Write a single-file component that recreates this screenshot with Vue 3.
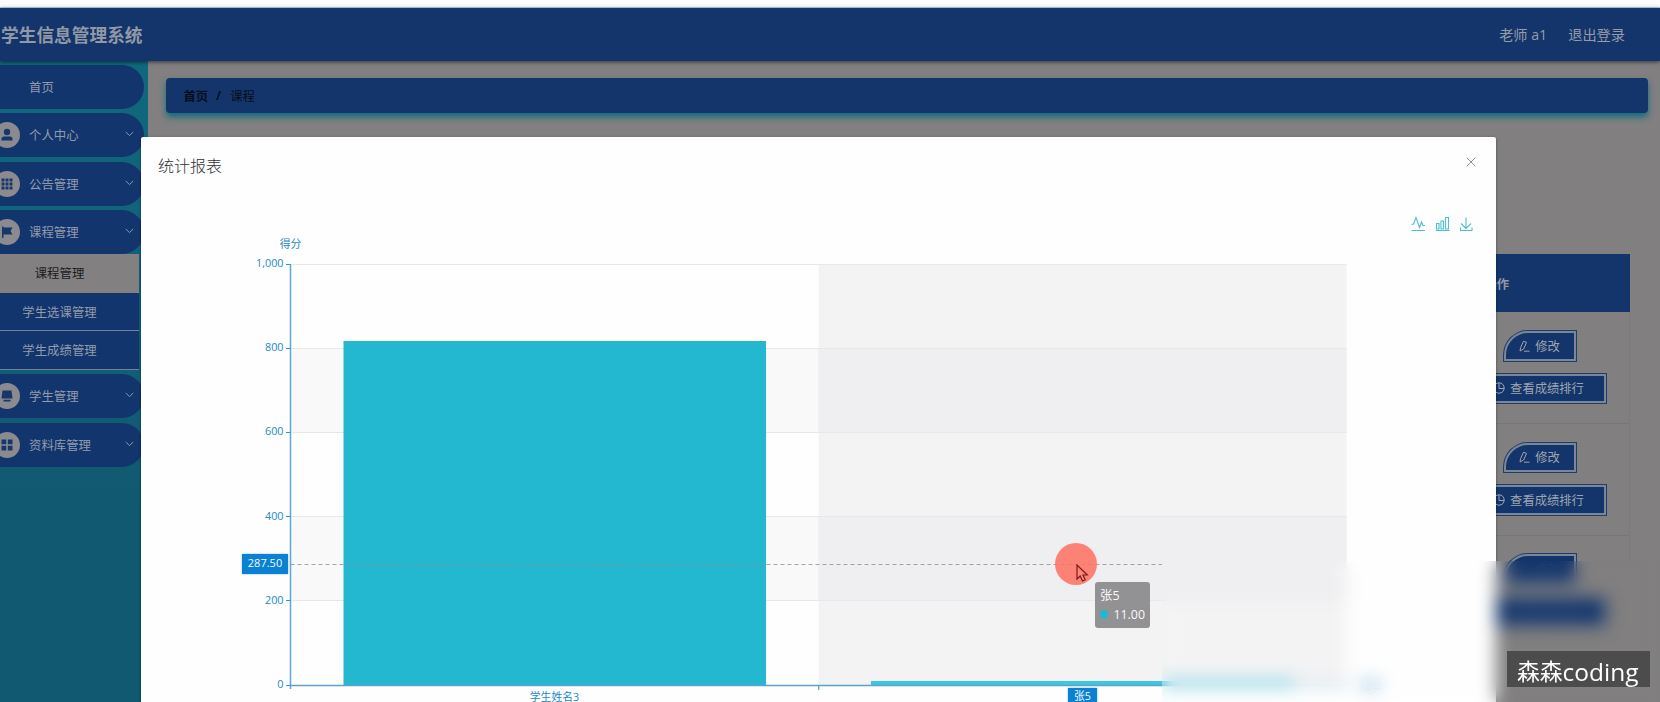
<script setup>
const menuTop = [
  { name: '首页', icon: '' },
  { name: '个人中心', icon: 'user' },
  { name: '公告管理', icon: 'grid' },
  { name: '课程管理', icon: 'flag' }
]
const subMenu = ['课程管理', '学生选课管理', '学生成绩管理']
const menuBottom = [
  { name: '学生管理', icon: 'screen' },
  { name: '资料库管理', icon: 'windows' }
]
const rows = [1, 2, 3]
const ticks = [1000, 800, 600, 400, 200, 0].map((v) => ({
  label: v.toLocaleString('en-US'),
  y: 127.5 + ((1000 - v) / 1000) * 421
}))
</script>

<template>
  <div class="page">
    <div class="strip"></div>
    <header class="header">
      <h1>学生信息管理系统</h1>
      <nav class="account"><span>老师 a1</span><span>退出登录</span></nav>
    </header>

    <div class="body">
      <aside class="sidebar">
        <template v-for="(group, g) in [menuTop, menuBottom]" :key="g">
          <div v-for="item in group" :key="item.name" class="item">
            <span class="badge" :class="{ hidden: !item.icon }">
              <svg width="14" height="14" viewBox="0 0 14 14" fill="#16376b">
                <template v-if="item.icon === 'user'">
                  <circle cx="7" cy="4" r="3.2" /><path d="M1.5 12.5V11Q1.5 8.5 4 8.5H10Q12.5 8.5 12.5 11V12.5Z" />
                </template>
                <template v-if="item.icon === 'grid'">
                  <path d="M1.5 1.5h3v3h-3zM5.5 1.5h3v3h-3zM9.5 1.5h3v3h-3zM1.5 5.5h3v3h-3zM5.5 5.5h3v3h-3zM9.5 5.5h3v3h-3zM1.5 9.5h3v3h-3zM5.5 9.5h3v3h-3zM9.5 9.5h3v3h-3z" />
                </template>
                <path v-if="item.icon === 'flag'" d="M2 1.5H3.5V2.5H12.5L10.5 6L12.5 9.5H3.5V13H2Z" />
                <template v-if="item.icon === 'screen'">
                  <path d="M2.5 1.5H11.5L12.5 9.5H1.5ZM3.5 10.7H10.5V12.5H3.5Z" />
                </template>
                <path v-if="item.icon === 'windows'" d="M1.5 1.5H6.2V6.2H1.5ZM7.8 1.5H12.5V6.2H7.8ZM1.5 7.8H6.2V12.5H1.5ZM7.8 7.8H12.5V12.5H7.8Z" />
              </svg>
            </span>
            <span class="label">{{ item.name }}</span>
            <svg v-if="item.icon" class="chev" width="9" height="6" viewBox="0 0 9 6">
              <path d="M0.8 1L4.5 4.6L8.2 1" fill="none" stroke="#8d97a9" stroke-width="1" />
            </svg>
          </div>
          <div v-if="g === 0" class="sub">
            <div v-for="(s, i) in subMenu" :key="s" class="subitem" :class="{ active: i === 0 }">{{ s }}</div>
          </div>
        </template>
      </aside>

      <main class="main">
        <div class="crumb"><b>首页</b><b class="slash">/</b><span>课程</span></div>
        <section class="table">
          <div class="thead">操作</div>
          <div v-for="r in rows" :key="r" class="row" :class="{ muted: r === 3 }">
            <button class="btn edit">
              <svg width="11" height="12" viewBox="0 0 11 12" fill="none" stroke="currentColor">
                <path d="M1.6 7.5L4.5 1.2L7.5 2.4L4.6 9L1 11ZM5 11.2H10.5" />
              </svg>
              修改
            </button>
            <button class="btn rank">
              <svg width="12" height="12" viewBox="0 0 12 12" fill="none" stroke="currentColor">
                <circle cx="6" cy="6" r="5.2" /><path d="M6 1V6.5H11" />
              </svg>
              查看成绩排行
            </button>
          </div>
        </section>
      </main>
    </div>

    <section class="dialog">
      <div class="dialog-head">
        <h2>统计报表</h2>
        <svg class="close" width="10" height="10" viewBox="0 0 10 10">
          <path d="M0.7 0.7L9.3 9.3M9.3 0.7L0.7 9.3" stroke="#909399" stroke-width="1" />
        </svg>
      </div>
      <svg class="chart" width="1355" height="565" viewBox="0 0 1355 565">
        <rect x="150" y="211.5" width="528" height="84" fill="#faf9fa" />
        <rect x="150" y="379.5" width="528" height="84.5" fill="#faf9fa" />
        <rect x="677.5" y="127" width="528" height="421.5" fill="#f3f3f4" />
        <rect x="677.5" y="211.5" width="528" height="84" fill="#efeef0" />
        <rect x="677.5" y="379.5" width="528" height="84.5" fill="#efeef0" />
        <path v-for="t in ticks" :key="t.label" :d="`M150 ${Math.round(t.y) - 0.5}H1205.5`" stroke="#e9e8e9" />
        <rect x="202.5" y="204" width="422.5" height="344.5" fill="#24b7d0" />
        <rect x="730" y="544" width="423" height="4.5" fill="#3ec8e0" />
        <path d="M149.5 127V552" stroke="#5ba9d8" stroke-width="1.5" />
        <path d="M149.5 548.5H1205.5" stroke="#5aa4c9" stroke-width="1.3" />
        <path d="M677.7 549V553" stroke="#5aa4c9" stroke-width="1.3" />
        <g class="axis">
          <path v-for="t in ticks" :key="t.label" :d="`M145 ${Math.round(t.y) - 0.5}H149.5`" stroke="#3494cc" />
          <text v-for="t in ticks" :key="'l' + t.label" x="142.5" :y="t.y + 2.5" text-anchor="end">{{ t.label }}</text>
          <text x="149.5" y="111" text-anchor="middle">得分</text>
          <text x="413.5" y="563.5" text-anchor="middle">学生姓名3</text>
          <text x="1219" y="552">姓名</text>
        </g>
        <path d="M149.5 427.5H1021" stroke="#8f8f96" stroke-opacity="0.8" stroke-dasharray="4 3" />
        <g fill="none" stroke="#4dc0cc" stroke-width="1.1">
          <path d="M1270.5 87.5L1272.5 87L1275 80.5L1278.5 90.5L1280.5 85L1282 88.5H1284M1270.5 93.5H1284" />
          <path d="M1295.5 86.5H1298V92H1295.5ZM1300 84H1302.5V92H1300ZM1304.5 80.5H1307.5V92H1304.5ZM1295 93.5H1308.5" />
          <path d="M1325 80.5V91M1320 86.5L1325 91.5L1330 86.5M1319.5 90.5V93.5H1331V90.5" />
        </g>
      </svg>
    </section>

    <div class="pointer y-pointer">287.50</div>
    <div class="pointer x-pointer">张5</div>
    <div class="halo"></div>
    <svg class="cursor" width="13" height="19" viewBox="0 0 13 19">
      <path d="M1 1V15L4.2 12L6.5 17L9.2 15.8L7 11H11.3Z" fill="#ff8478" stroke="#7c1a1a" stroke-width="1.2" />
    </svg>
    <div class="tooltip">
      <div>张5</div>
      <div class="value"><i></i>11.00</div>
    </div>
    <div class="frost"></div>
    <div class="sign">森森<span>coding</span></div>
  </div>
</template>

<style>
body { margin: 0; overflow: hidden; }
</style>

<style scoped>
* { box-sizing: border-box; }
.page {
  position: relative;
  width: 1660px;
  height: 702px;
  overflow: hidden;
  background: #817f7f;
  font-family: "Open Sans", "Noto Sans CJK SC", sans-serif;
  display: flex;
  flex-direction: column;
}
.strip { height: 8px; flex: none; background: #fcfcfe; border-bottom: 1px solid #c4d2ec; }
.header {
  height: 53px;
  flex: none;
  display: flex;
  align-items: center;
  justify-content: space-between;
  padding: 0 35px 1px 1px;
  background: #13356b;
  box-shadow: 0 1px 4px rgba(0, 0, 0, 0.6);
  color: #959ba8;
  z-index: 1;
}
h1 { margin: 0; font-size: 17.7px; font-weight: 700; color: #9299a6; }
.account { display: flex; gap: 21px; font-size: 14.2px; }
.body { flex: 1; display: flex; min-height: 0; }
.sidebar {
  width: 148px;
  flex: none;
  padding-top: 4px;
  background: linear-gradient(#10687d, #115f77 45%, #115970 70%);
}
.item {
  width: 144px;
  height: 43.8px;
  margin-bottom: 4.6px;
  display: flex;
  align-items: center;
  background: #13356d;
  border-radius: 0 22px 22px 0;
  color: #929bac;
  font-size: 12.4px;
}
.badge {
  width: 26px;
  height: 26px;
  margin-left: -6px;
  flex: none;
  display: flex;
  align-items: center;
  justify-content: center;
  border-radius: 50%;
  background: #8b8b8f;
}
.badge.hidden { visibility: hidden; }
.label { margin-left: 9px; flex: 1; }
.chev { margin-right: 10px; margin-top: -2px; }
.sub { width: 139px; margin: -4.6px 0 4.6px; }
.subitem {
  height: 38.6px;
  padding: 0.5px 20px 0 0;
  display: flex;
  align-items: center;
  justify-content: center;
  background: #13356d;
  border-bottom: 1px solid #72809b;
  color: #929bac;
  font-size: 12.4px;
}
.subitem.active { background: #838081; border-color: #838081; color: #1c1c1c; }
.main { flex: 1; padding: 17px 12px 0 18px; }
.crumb {
  height: 35px;
  padding: 0 17.5px;
  display: flex;
  align-items: center;
  background: #13356b;
  border-radius: 4px;
  box-shadow: 0 4px 6px #106b80;
  font-size: 12.3px;
  color: #070e1c;
}
.crumb .slash { margin: 0 9px 0 8px; }
.table { width: 1444px; margin-top: 141px; border-right: 1px solid #7b7a7c; margin-left: 19.5px; }
.thead {
  height: 58px;
  margin-right: -1px;
  padding: 1px 0 0 1299px;
  display: flex;
  align-items: center;
  background: #13356b;
  color: #9299a6;
  font-size: 12.3px;
  font-weight: 700;
}
.row {
  height: 112px;
  width: 266px;
  margin-left: auto;
  padding-top: 21px;
  display: flex;
  flex-direction: column;
  align-items: center;
  gap: 17px;
  border-bottom: 1px solid #787777;
}
.row + .row { height: 111.5px; padding-top: 20.5px; }
.btn {
  height: 25.5px;
  flex: none;
  display: flex;
  align-items: center;
  justify-content: center;
  gap: 5px;
  border: 0;
  padding: 0;
  background: #13356b;
  box-shadow: 0 0 0 2px #7f8693, 0 0 0 3px #1c3d70;
  color: #9ea4af;
  font-family: inherit;
  font-size: 12.3px;
}
.muted .btn { color: #29477a; }
.edit { width: 68px; margin-left: 88px; border-radius: 22px 0 0 0; }
.rank { width: 130px; margin-left: 86px; }
.dialog {
  position: absolute;
  left: 141px;
  top: 137px;
  width: 1355px;
  height: 580px;
  background: #fefefe;
  border-radius: 2px 2px 0 0;
  box-shadow: 0 1px 3px rgba(0, 0, 0, 0.45);
  z-index: 2;
}
.dialog-head {
  height: 56px;
  display: flex;
  align-items: center;
  justify-content: space-between;
  padding: 0 20px 0 17px;
}
h2 { margin: 0; font-size: 16px; font-weight: 300; color: #303133; }
.close { margin-top: -6px; }
.chart { display: block; margin-top: -71px; position: relative; top: 15px; overflow: visible; }
.axis text { font-size: 10.8px; fill: #2489c4; font-family: "Open Sans", "Noto Sans CJK SC", sans-serif; }
.pointer {
  position: absolute;
  z-index: 3;
  height: 20px;
  line-height: 18px;
  background: #0a81d2;
  color: #f2faff;
  font-size: 11px;
  text-align: center;
  box-shadow: 0 0 2px #93b4cc;
}
.y-pointer { left: 242px; top: 554px; width: 46px; }
.x-pointer { left: 1068px; top: 688px; width: 29px; line-height: 16px; font-size: 10.8px; }
.halo {
  position: absolute;
  z-index: 3;
  left: 1055px;
  top: 543px;
  width: 42px;
  height: 42px;
  border-radius: 50%;
  background: rgba(255, 112, 98, 0.86);
}
.cursor { position: absolute; z-index: 4; left: 1075.5px; top: 563.5px; }
.tooltip {
  position: absolute;
  z-index: 4;
  left: 1095px;
  top: 582px;
  width: 55px;
  height: 46px;
  padding: 4px 5px;
  border-radius: 3px;
  background: #929193;
  color: #fafafa;
  font-size: 12.4px;
  line-height: 19px;
}
.value { display: flex; align-items: center; }
.value i { width: 9px; height: 9px; margin-right: 5px; border-radius: 50%; background: #20b7cf; }
.frost {
  position: absolute;
  z-index: 5;
  left: 1162px;
  top: 561px;
  right: 0;
  bottom: 0;
  backdrop-filter: blur(8.5px);
}
.sign {
  position: absolute;
  z-index: 6;
  left: 1507px;
  top: 651px;
  width: 143px;
  height: 36px;
  padding: 5px 0 0 10px;
  display: flex;
  align-items: center;
  background: #4d4c4d;
  color: #fff;
  font-size: 22.8px;
  line-height: 31px;
  white-space: nowrap;
}
.sign span { font-size: 24.5px; }
</style>
